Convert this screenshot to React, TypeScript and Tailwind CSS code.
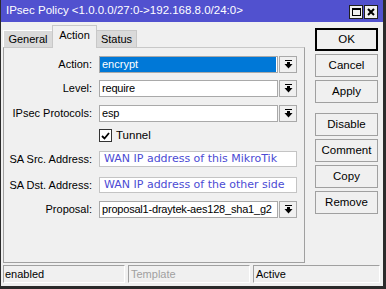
import React from "react";

function DropIcon() {
  return (
    <svg width="9" height="9" viewBox="0 0 9 9" className="block">
      <rect x="1" y="0" width="7" height="1" fill="#000" />
      <rect x="3" y="2" width="3" height="2" fill="#000" />
      <polygon points="0.5,4 8.5,4 4.5,8.5" fill="#000" />
    </svg>
  );
}

function Combo({ value, selected }: { value: string; selected?: boolean }) {
  return (
    <div className="flex h-[17px] gap-[1px]">
      <div className="w-[179px] h-full border border-[#a9a9a9] bg-white flex overflow-hidden">
        {selected ? (
          <div className="flex-1 mr-[1px] bg-[#0078d7] text-white pl-[2px] leading-[15px] whitespace-nowrap">{value}</div>
        ) : (
          <div className="flex-1 pl-[2px] leading-[15px] text-black whitespace-nowrap tracking-[-0.2px]">{value}</div>
        )}
      </div>
      <div className="w-[18px] h-full border border-[#a9a9a9] bg-[#f0f0f0] flex items-center justify-center">
        <DropIcon />
      </div>
    </div>
  );
}

function Row({ label, children, className }: { label: string; children: React.ReactNode; className: string }) {
  return (
    <div className={"flex items-center " + className}>
      <div className="w-[89px] text-right pr-[1px] text-black whitespace-nowrap">{label}</div>
      <div className="ml-[6px]">{children}</div>
    </div>
  );
}

function Btn({ label, primary, className }: { label: string; primary?: boolean; className?: string }) {
  return (
    <div
      className={
        "h-[23px] w-[63px] flex items-center justify-center bg-[#f0f0f0] text-[11.5px] text-black " +
        (primary ? "border-2 border-black " : "border border-[#a0a0a0] ") +
        (className ?? "")
      }
    >
      {label}
    </div>
  );
}

export default function App() {
  return (
    <div className="w-[386px] h-[289px] bg-[#f0f0f0] border-l border-r-[3px] border-b-[3px] border-[#2b2b2b] flex flex-col font-['Liberation_Sans',Arial,sans-serif] text-[11px] overflow-hidden">
      {/* title bar */}
      <div className="h-[22px] bg-[#5151cf] flex items-center pl-[5px] pr-[5px] shrink-0">
        <div className="flex-1 text-white text-[11.5px] whitespace-nowrap">IPsec Policy &lt;1.0.0.0/27:0-&gt;192.168.8.0/24:0&gt;</div>
        <div className="flex gap-[1px] mt-[2px]">
          <div className="w-[14px] h-[14px] bg-[#f0f0f0] border border-[#202020] flex items-center justify-center">
            <div className="w-[9px] h-[8px] border border-black border-t-2" />
          </div>
          <div className="w-[14px] h-[14px] bg-[#f0f0f0] border border-[#202020] flex items-center justify-center">
            <svg width="8" height="8" viewBox="0 0 8 8">
              <path d="M1 1 L7 7 M7 1 L1 7" stroke="#000" strokeWidth="2" />
            </svg>
          </div>
        </div>
      </div>

      {/* body */}
      <div className="flex h-[243px] shrink-0">
        <div className="ml-[2px] w-[302px] pt-[3px] flex flex-col">
          <div className="h-[22px] flex items-end">
            <div className="h-[17px] w-[49px] bg-[#dadada] border-t border-l border-white flex items-center justify-center text-black">General</div>
            <div className="relative z-10 -mb-px h-[23px] w-[45px] bg-[#f0f0f0] border-t border-l border-r border-[#c8c8c8] flex items-center justify-center text-black pb-[3px]">Action</div>
            <div className="h-[17px] w-[40px] bg-[#dadada] border-t border-r border-[#c8c8c8] flex items-center justify-center text-black">Status</div>
          </div>
          <div className="h-[216px] border border-[#a0a0a0] border-t-[#c8c8c8] bg-[#f0f0f0] flex flex-col">
            <Row label="Action:" className="mt-[8px]">
              <Combo value="encrypt" selected />
            </Row>
            <Row label="Level:" className="mt-[7px]">
              <Combo value="require" />
            </Row>
            <Row label="IPsec Protocols:" className="mt-[8px]">
              <Combo value="esp" />
            </Row>
            <div className="flex items-center mt-[7px] ml-[95px] h-[13px]">
              <div className="w-[13px] h-[13px] bg-white border border-[#333] flex items-center justify-center">
                <svg width="9" height="8" viewBox="0 0 9 8">
                  <path d="M1 4 L3.5 6.5 L8 1" stroke="#000" strokeWidth="1.8" fill="none" />
                </svg>
              </div>
              <span className="ml-[4px] text-[11.5px] text-black">Tunnel</span>
            </div>
            <Row label="SA Src. Address:" className="mt-[9px]">
              <div className="w-[198px] h-[16px] bg-white border border-[#c4c4c4] pl-[4px] leading-[14px] text-[#4b4bd4] font-['DejaVu_Sans',Verdana,sans-serif] whitespace-nowrap overflow-hidden">
                WAN IP address of this MikroTik
              </div>
            </Row>
            <Row label="SA Dst. Address:" className="mt-[9px]">
              <div className="w-[198px] h-[16px] bg-white border border-[#c4c4c4] pl-[4px] leading-[14px] text-[#4b4bd4] font-['DejaVu_Sans',Verdana,sans-serif] whitespace-nowrap overflow-hidden">
                WAN IP address of the other side
              </div>
            </Row>
            <Row label="Proposal:" className="mt-[8px]">
              <Combo value="proposal1-draytek-aes128_sha1_g2" />
            </Row>
          </div>
        </div>

        <div className="ml-[10px] pt-[6px] flex flex-col">
          <Btn label="OK" primary />
          <Btn label="Cancel" className="mt-[3px]" />
          <Btn label="Apply" className="mt-[3px]" />
          <Btn label="Disable" className="mt-[10px]" />
          <Btn label="Comment" className="mt-[3px]" />
          <Btn label="Copy" className="mt-[3px]" />
          <Btn label="Remove" className="mt-[3px]" />
        </div>
      </div>

      {/* status bar */}
      <div className="flex ml-[2px] gap-[3px] h-[18px] shrink-0">
        <div className="w-[122px] border border-[#a0a0a0] border-r-white border-b-white pl-[1px] leading-[16px] text-black">enabled</div>
        <div className="w-[122px] border border-[#a0a0a0] border-r-white border-b-white pl-[2px] leading-[16px] text-[#a0a0a0]">Template</div>
        <div className="w-[127px] border border-[#a0a0a0] border-r-white border-b-white pl-[2px] leading-[16px] text-black">Active</div>
      </div>
    </div>
  );
}
